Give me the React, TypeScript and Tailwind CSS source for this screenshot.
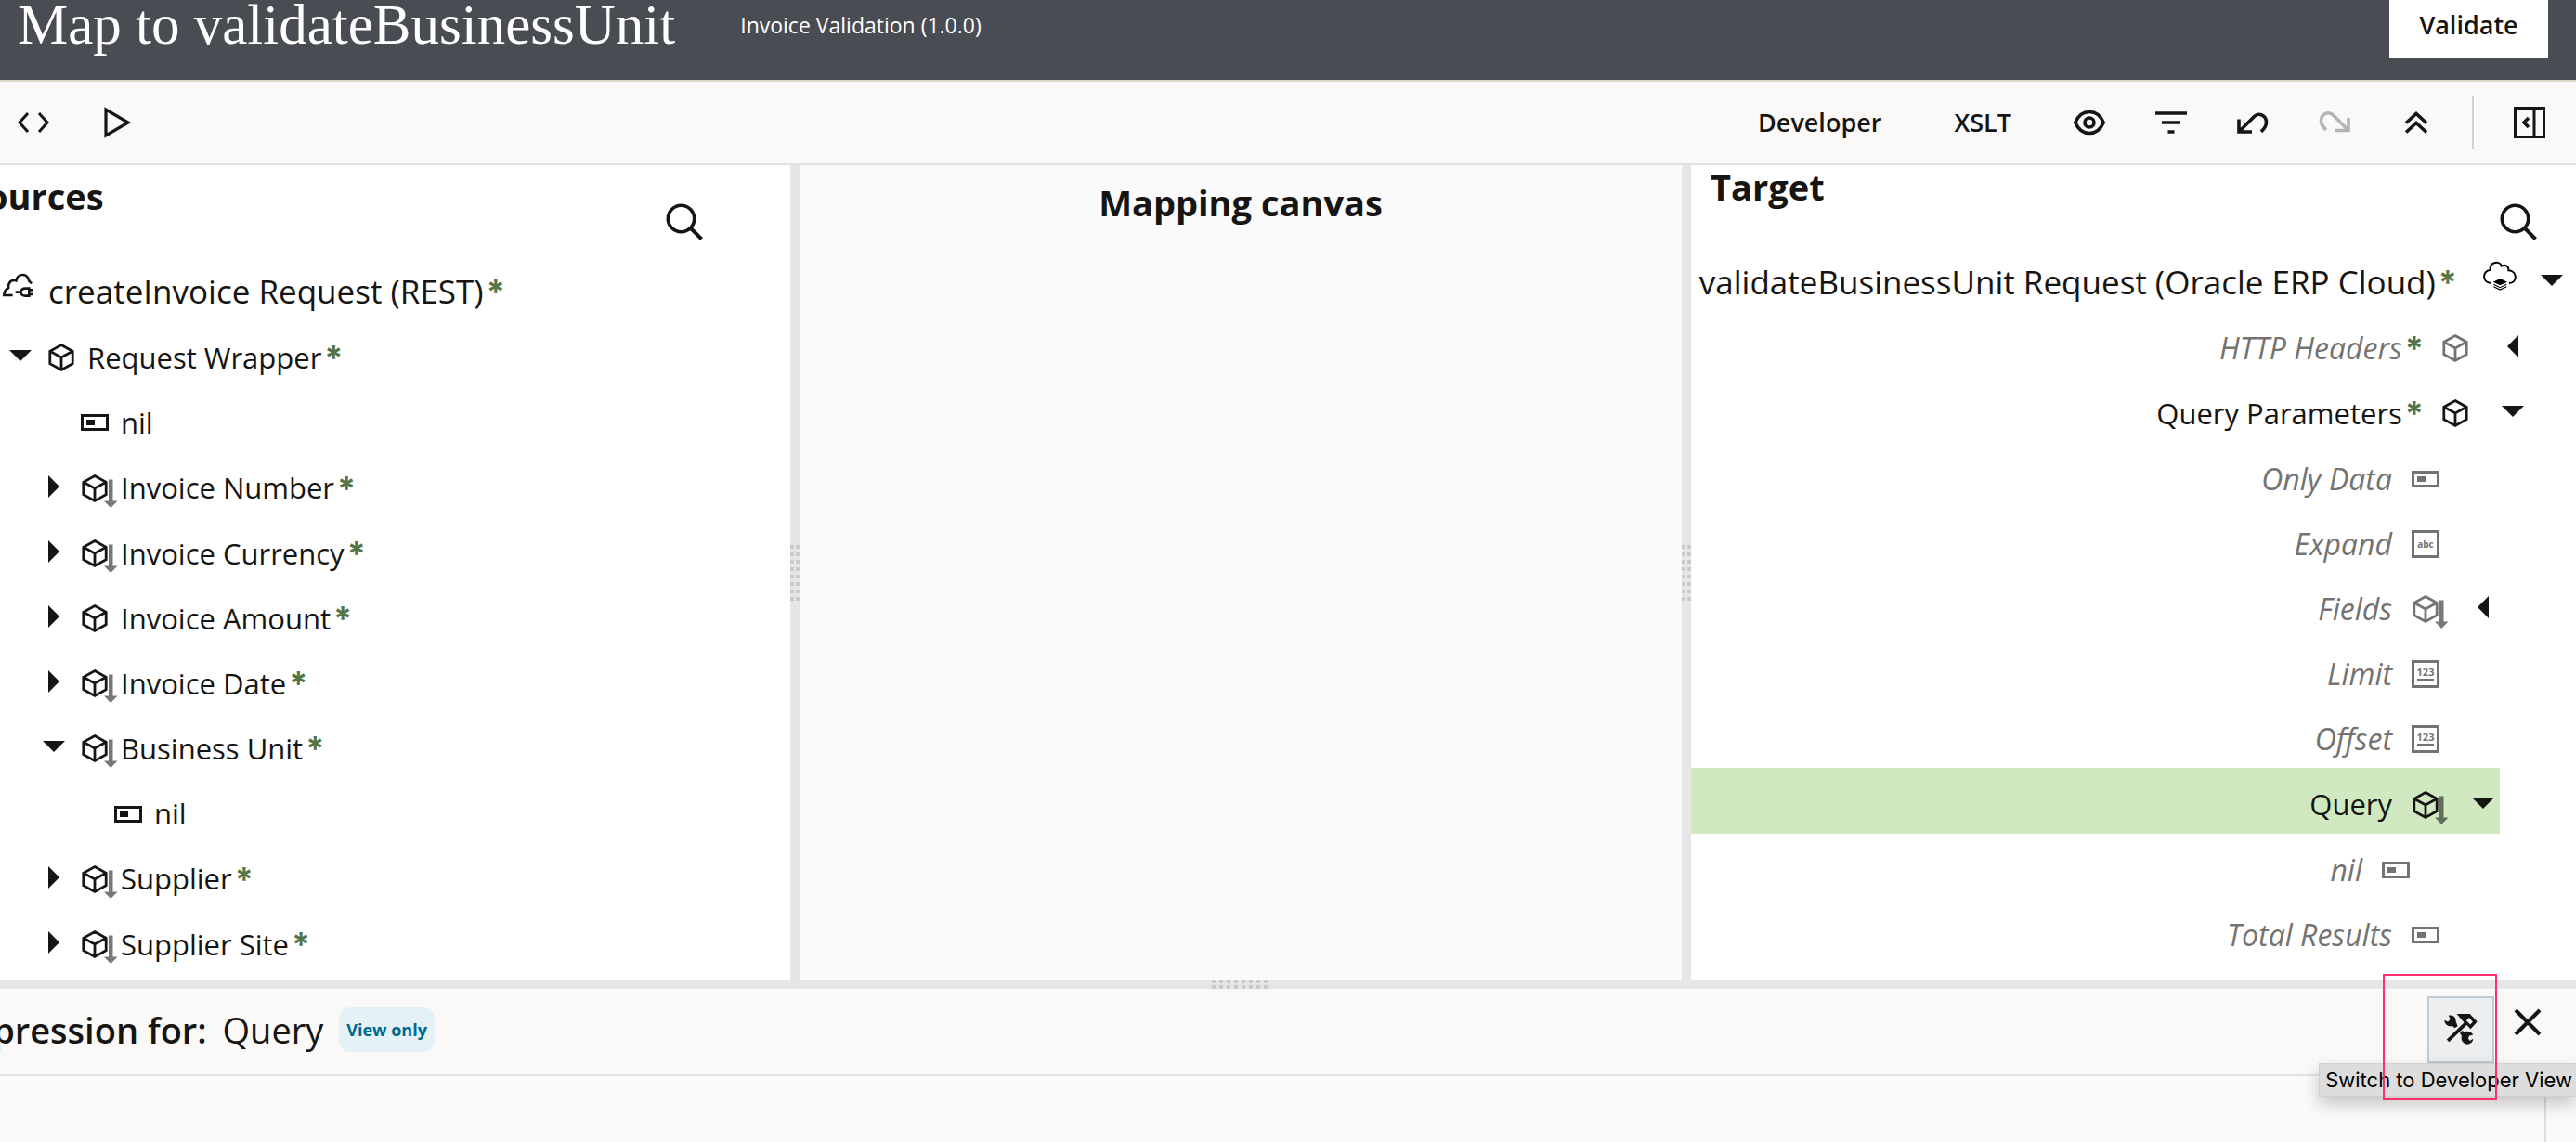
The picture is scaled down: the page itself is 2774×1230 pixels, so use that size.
import React from "react";

type NodeKind = "cube" | "cubeMapped" | "attribute" | "text" | "number" | "rest" | "erp";
type Twisty = "open" | "closed" | "none";
type TreeNode = {
  label: string;
  kind: NodeKind;
  level: number;
  twisty: Twisty;
  required?: boolean;
  muted?: boolean;
  selected?: boolean;
};

const sourceNodes: TreeNode[] = [
  { label: "createInvoice Request (REST)", kind: "rest", level: 0, twisty: "none", required: true },
  { label: "Request Wrapper", kind: "cube", level: 1, twisty: "open", required: true },
  { label: "nil", kind: "attribute", level: 2, twisty: "none" },
  { label: "Invoice Number", kind: "cubeMapped", level: 2, twisty: "closed", required: true },
  { label: "Invoice Currency", kind: "cubeMapped", level: 2, twisty: "closed", required: true },
  { label: "Invoice Amount", kind: "cube", level: 2, twisty: "closed", required: true },
  { label: "Invoice Date", kind: "cubeMapped", level: 2, twisty: "closed", required: true },
  { label: "Business Unit", kind: "cubeMapped", level: 2, twisty: "open", required: true },
  { label: "nil", kind: "attribute", level: 3, twisty: "none" },
  { label: "Supplier", kind: "cubeMapped", level: 2, twisty: "closed", required: true },
  { label: "Supplier Site", kind: "cubeMapped", level: 2, twisty: "closed", required: true },
];

const targetNodes: TreeNode[] = [
  { label: "validateBusinessUnit Request (Oracle ERP Cloud)", kind: "erp", level: 0, twisty: "open", required: true },
  { label: "HTTP Headers", kind: "cube", level: 1, twisty: "closed", required: true, muted: true },
  { label: "Query Parameters", kind: "cube", level: 1, twisty: "open", required: true },
  { label: "Only Data", kind: "attribute", level: 2, twisty: "none", muted: true },
  { label: "Expand", kind: "text", level: 2, twisty: "none", muted: true },
  { label: "Fields", kind: "cubeMapped", level: 2, twisty: "closed", muted: true },
  { label: "Limit", kind: "number", level: 2, twisty: "none", muted: true },
  { label: "Offset", kind: "number", level: 2, twisty: "none", muted: true },
  { label: "Query", kind: "cubeMapped", level: 2, twisty: "open", selected: true },
  { label: "nil", kind: "attribute", level: 3, twisty: "none", muted: true },
  { label: "Total Results", kind: "attribute", level: 2, twisty: "none", muted: true },
];

const sourceIndent = ["pl-0", "pl-0", "pl-9", "pl-[72px]"];
const targetIndent = ["mr-2", "mr-[50px]", "mr-[82px]", "mr-[114px]"];

function CubeIcon({ mapped }: { mapped?: boolean }) {
  return (
    <svg viewBox="0 0 36 36" className="size-9 overflow-visible" fill="none" stroke="currentColor" strokeWidth="2.8">
      <path d="M18 4.5 30.2 11.3V24.7L18 31.5 5.8 24.7V11.3ZM5.8 11.3 18 18 30.2 11.3M18 18V31.5" />
      {mapped && (
        <g stroke="none" fill="#000" fillOpacity="0.53">
          <path d="M33 8.5h4.5v23h-4.5zM28 31.5h14.5L35.2 39z" />
        </g>
      )}
    </svg>
  );
}

function AttributeIcon() {
  return (
    <svg viewBox="0 0 36 36" className="size-9" fill="none">
      <rect x="4.5" y="10.5" width="27" height="15" stroke="currentColor" strokeWidth="3" />
      <rect x="9" y="15" width="9" height="6" fill="currentColor" />
    </svg>
  );
}

function TypeIcon({ text, underline }: { text: string; underline?: boolean }) {
  return (
    <svg viewBox="0 0 36 36" className="size-9" fill="none">
      <rect x="4.5" y="4.5" width="27" height="27" stroke="currentColor" strokeWidth="3" />
      <text
        x="18"
        y={underline ? 20 : 22}
        textAnchor="middle"
        fill="currentColor"
        fontSize={underline ? 11 : 10}
        fontWeight="700"
        fontStyle="normal"
        fontFamily="Open Sans"
      >
        {text}
      </text>
      {underline && <rect x="9" y="23" width="18" height="3" fill="currentColor" />}
    </svg>
  );
}

function RestIcon() {
  return (
    <svg viewBox="0 0 108 108" className="size-9" fill="none" stroke="currentColor" strokeWidth="8">
      <path d="M41 84H13c1-12 6-20 14-23-1-19 11-29 25-24C56 13 88 10 94 38l8 8" />
      <path d="M94 62H82c-9 0-15 5-15 12s6 12 15 12h12zM50 74h16M94 67h12M94 81h12" />
    </svg>
  );
}

function ErpIcon() {
  return (
    <svg viewBox="0 0 108 108" className="size-9 text-black" fill="none" stroke="currentColor" strokeWidth="6">
      <path d="M27 75C-4 74-4 34 23 33 20 4 54 2 60 20c12-7 24 2 22 14 30 2 29 40 2 41" />
      <path d="m55 60 23 11-23 11-23-11z" fill="currentColor" stroke="none" />
      <path d="m34 79 21 10 21-10M34 86l21 10 21-10" strokeWidth="3.5" />
    </svg>
  );
}

function NodeIcon({ kind }: { kind: NodeKind }) {
  switch (kind) {
    case "cube":
      return <CubeIcon />;
    case "cubeMapped":
      return <CubeIcon mapped />;
    case "attribute":
      return <AttributeIcon />;
    case "text":
      return <TypeIcon text="abc" />;
    case "number":
      return <TypeIcon text="123" underline />;
    case "rest":
      return <RestIcon />;
    default:
      return <ErpIcon />;
  }
}

function Triangle({ state, side }: { state: Twisty; side: "left" | "right" }) {
  const closed = side === "left" ? "M6 0 18 12 6 24Z" : "M18 0 6 12 18 24Z";
  return (
    <svg viewBox="0 0 24 24" className="size-6 text-[#161513]" fill="currentColor">
      <path d={state === "open" ? "M0 6H24L12 18Z" : closed} />
    </svg>
  );
}

function Required() {
  return (
    <span aria-label="required" className="pl-[3px] font-['Inter'] text-[36px] leading-[40px] font-bold text-[#567547] not-italic">
      *
    </span>
  );
}

function SourceRow({ node }: { node: TreeNode }) {
  const root = node.level === 0;
  return (
    <li className={`flex items-center ${root ? "pt-1.5" : "pt-2"} ${sourceIndent[node.level]}`}>
      {!root && (
        <span className="flex w-11 shrink-0 justify-center pb-1">
          {node.twisty !== "none" && (
            <button type="button" aria-label={`Toggle ${node.label}`}>
              <Triangle state={node.twisty} side="left" />
            </button>
          )}
        </span>
      )}
      <span className={`flex shrink-0 ${root ? "w-[52px] pb-3" : "w-[50px] pl-1"}`}>
        <NodeIcon kind={node.kind} />
      </span>
      <span className={`whitespace-nowrap ${root ? "text-[35px]" : "text-[31px]"}`}>{node.label}</span>
      {node.required && <Required />}
    </li>
  );
}

function TargetRow({ node }: { node: TreeNode }) {
  const root = node.level === 0;
  const size = root ? "text-[35px]" : node.muted ? "text-[32px]" : "text-[31px]";
  return (
    <li
      className={`flex items-center justify-end ${root ? "pt-1.5" : "pt-2"} ${targetIndent[node.level]} ${
        node.selected ? "bg-[#d0e9c0]" : ""
      } ${node.muted ? "text-[#757371] italic" : ""}`}
    >
      <span className={`whitespace-nowrap ${size}`}>{node.label}</span>
      {node.required && <Required />}
      <span className={`flex shrink-0 ${root ? "mr-5 ml-7 pb-3" : node.required ? "mr-[26px] ml-4" : "mr-[26px] ml-[18px]"}`}>
        <NodeIcon kind={node.kind} />
      </span>
      <span className="flex w-9 shrink-0 justify-center pb-1">
        {node.twisty !== "none" && (
          <button type="button" aria-label={`Toggle ${node.label}`}>
            <Triangle state={node.twisty} side="right" />
          </button>
        )}
      </span>
    </li>
  );
}

function SearchIcon() {
  return (
    <svg viewBox="0 0 40 40" className="size-10" fill="none" stroke="currentColor" strokeWidth="3.6">
      <circle cx="16.5" cy="16.5" r="14.2" />
      <path d="M26.5 26.5 38.5 38.5" strokeWidth="4" />
    </svg>
  );
}

function VerticalSplitter() {
  return (
    <div role="separator" className="flex items-center justify-center bg-[#e6e6e6]">
      <div className="grid grid-cols-2 gap-x-0.5 gap-y-1">
        {Array.from({ length: 16 }, (_, i) => (
          <span key={i} className="size-1 bg-[#cacaca]" />
        ))}
      </div>
    </div>
  );
}

function ToolButton({ label, disabled, children }: { label: string; disabled?: boolean; children: React.ReactNode }) {
  return (
    <button
      type="button"
      aria-label={label}
      disabled={disabled}
      className="flex size-12 items-center justify-center text-[#161513] disabled:text-[#b5b4b2]"
    >
      <svg viewBox="0 0 36 36" className="size-9" fill="none" stroke="currentColor" strokeWidth="3.6">
        {children}
      </svg>
    </button>
  );
}

export default function App() {
  return (
    <div className="flex min-h-screen flex-col overflow-hidden bg-white font-['Open_Sans','Noto_Sans',sans-serif] text-[#161513]">
      <header className="flex h-[88px] items-start border-b-2 border-[#dcd9c9] bg-[#4a4c54] pr-[30px] pl-[19px] text-white">
        <h1 className="font-['Liberation_Serif',serif] text-[61px] leading-[54px] whitespace-nowrap">Map to validateBusinessUnit</h1>
        <span className="ml-[70px] text-[23px] leading-[54px]">Invoice Validation (1.0.0)</span>
        <button type="button" className="ml-auto h-[62px] w-[171px] bg-white pb-2 text-[27px] font-semibold text-[#161513]">
          Validate
        </button>
      </header>

      <div className="flex h-[90px] items-center border-b-2 border-[#e1e1e1] bg-[#fbf9f8] pr-[26px] pl-3">
        <ToolButton label="Code">
          <path d="M12 8 3 18l9 10M24 8l9 10-9 10" strokeWidth="3" />
        </ToolButton>
        <div className="ml-[42px] flex">
          <ToolButton label="Test">
            <path d="M6 4v28l24-14z" strokeWidth="3.2" />
          </ToolButton>
        </div>
        <button type="button" className="ml-auto text-[27px] font-semibold">
          Developer
        </button>
        <button type="button" className="ml-[78px] text-[27px] font-semibold">
          XSLT
        </button>
        <div className="ml-[60px] flex items-center gap-10">
          <ToolButton label="View">
            <path d="M2.8 18C6 10.5 11 6.5 18 6.5S30 10.5 33.2 18C30 25.5 25 29.5 18 29.5S6 25.5 2.8 18Z" />
            <circle cx="18" cy="18" r="5" />
          </ToolButton>
          <ToolButton label="Filter">
            <path d="M1 8h34M8 18h20M14.5 28h7" />
          </ToolButton>
          <ToolButton label="Undo">
            <path d="M3 14.5V28h14M4 27 19.5 11.5C22 9 25 9 27.5 9.8c6 2.5 7.5 11-.5 18" />
          </ToolButton>
          <ToolButton label="Redo" disabled>
            <path d="M33 13v13.5H19M32 25.5 16.5 10C14 7.5 11 7.5 8.5 8.3c-6 2.5-7.5 11 .5 17.5" />
          </ToolButton>
          <ToolButton label="Collapse">
            <path d="M7 18.5 18 8.5l11 10M7 28.5 18 18.5l11 10" />
          </ToolButton>
        </div>
        <div className="ml-9 h-[58px] w-0.5 bg-[#d3d2d0]" />
        <div className="ml-9">
          <ToolButton label="Toggle panel">
            <path d="M2.5 2.5h31v31h-31zM23 2.5v31" strokeWidth="3" />
            <path d="M17 13l-5 5 5 5" />
          </ToolButton>
        </div>
      </div>

      <main className="grid grid-cols-[851fr_10px_950fr_10px_953fr]">
        <section className="min-w-0 overflow-hidden pb-[7px]">
          <div className="flex h-[98px] items-start justify-between pr-[94px]">
            <h2 className="-ml-9 pt-[5px] text-[38px] leading-[56px] font-bold">Sources</h2>
            <button type="button" aria-label="Search sources" className="mt-[41px]">
              <SearchIcon />
            </button>
          </div>
          <ul className="grid h-[772px] auto-rows-fr grid-cols-1">
            {sourceNodes.map((node, i) => (
              <SourceRow key={i} node={node} />
            ))}
          </ul>
        </section>

        <VerticalSplitter />

        <section className="min-w-0 bg-[#fafafa] pt-3 text-center">
          <h2 className="text-[38px] leading-[56px] font-bold">Mapping canvas</h2>
        </section>

        <VerticalSplitter />

        <section className="min-w-0 overflow-hidden">
          <div className="flex h-[88px] items-start justify-between pr-[42px] pl-[21px]">
            <h2 className="text-[38px] leading-[46px] font-bold">Target</h2>
            <button type="button" aria-label="Search target" className="mt-[41px]">
              <SearchIcon />
            </button>
          </div>
          <ul className="grid h-[772px] auto-rows-fr grid-cols-1">
            {targetNodes.map((node, i) => (
              <TargetRow key={i} node={node} />
            ))}
          </ul>
        </section>
      </main>

      <div role="separator" className="flex h-2.5 items-center justify-center bg-[#e6e6e6] pr-[104px]">
        <div className="grid grid-cols-8 gap-x-1 gap-y-0.5">
          {Array.from({ length: 16 }, (_, i) => (
            <span key={i} className="size-1 bg-[#cacaca]" />
          ))}
        </div>
      </div>

      <section className="flex flex-1 flex-col bg-[#fbfaf8]">
        <div className="flex h-[94px] items-start border-b-2 border-[#e3e2e1] bg-[#faf9f7]">
          <h2 className="-ml-[50px] pt-4 text-[38px] leading-[56px] font-semibold whitespace-nowrap">
            Expression for: <span className="pl-[7px] font-normal">Query</span>
          </h2>
          <span className="mt-5 ml-[17px] flex h-12 items-center rounded-xl bg-[#e4f1f7] px-2 text-[18px] font-bold whitespace-nowrap text-[#00688c]">
            View only
          </span>
          <div className="relative mt-2 mr-[30px] ml-auto flex items-center gap-[14px]">
            <button
              type="button"
              aria-label="Switch to Developer View"
              className="flex size-[72px] items-center justify-center border-2 border-[#bfcbd4] bg-[#edeef0]"
            >
              <svg viewBox="0 0 106 102" className="size-9" fill="none">
                <path d="M12 86 70 30" stroke="currentColor" strokeWidth="11" />
                <path
                  fillRule="evenodd"
                  d="M40 1H82L105 26 84 49 64 29ZM79 13 70 22 83 35 91 26Z"
                  fill="currentColor"
                />
                <path
                  d="M14 6C28 2 39 12 37 24L43 40 34 46 26 39C14 43 2 36 1 21L12 26 20 18Z"
                  fill="currentColor"
                />
                <path
                  d="M58 54 64 58C74 54 86 58 92 67L80 70 76 78 82 86 92 80C92 93 78 101 66 95 56 90 53 80 56 71L50 62Z"
                  fill="currentColor"
                />
              </svg>
            </button>
            <button type="button" aria-label="Close" className="mb-4 flex size-11 items-center justify-center">
              <svg viewBox="0 0 30 30" className="size-[30px]" stroke="currentColor" strokeWidth="4">
                <path d="M2 2 28 28M28 2 2 28" />
              </svg>
            </button>
            <div
              role="tooltip"
              className="absolute top-[72px] right-[-30px] flex h-9 items-center border border-r-0 border-[#d0d1d0] bg-[#dcdddc] pr-1 pl-1.5 font-['Inter'] text-[22px] whitespace-nowrap text-black shadow-[0_8px_18px_rgba(0,0,0,0.22)]"
            >
              Switch to Developer View
            </div>
            <div className="pointer-events-none absolute -top-[24px] -left-[48px] h-[136px] w-[123px] border-2 border-[#ff2f6e]" />
          </div>
        </div>
        <div className="mr-8 flex-1 border-r-2 border-[#dedddb]" />
      </section>
    </div>
  );
}
